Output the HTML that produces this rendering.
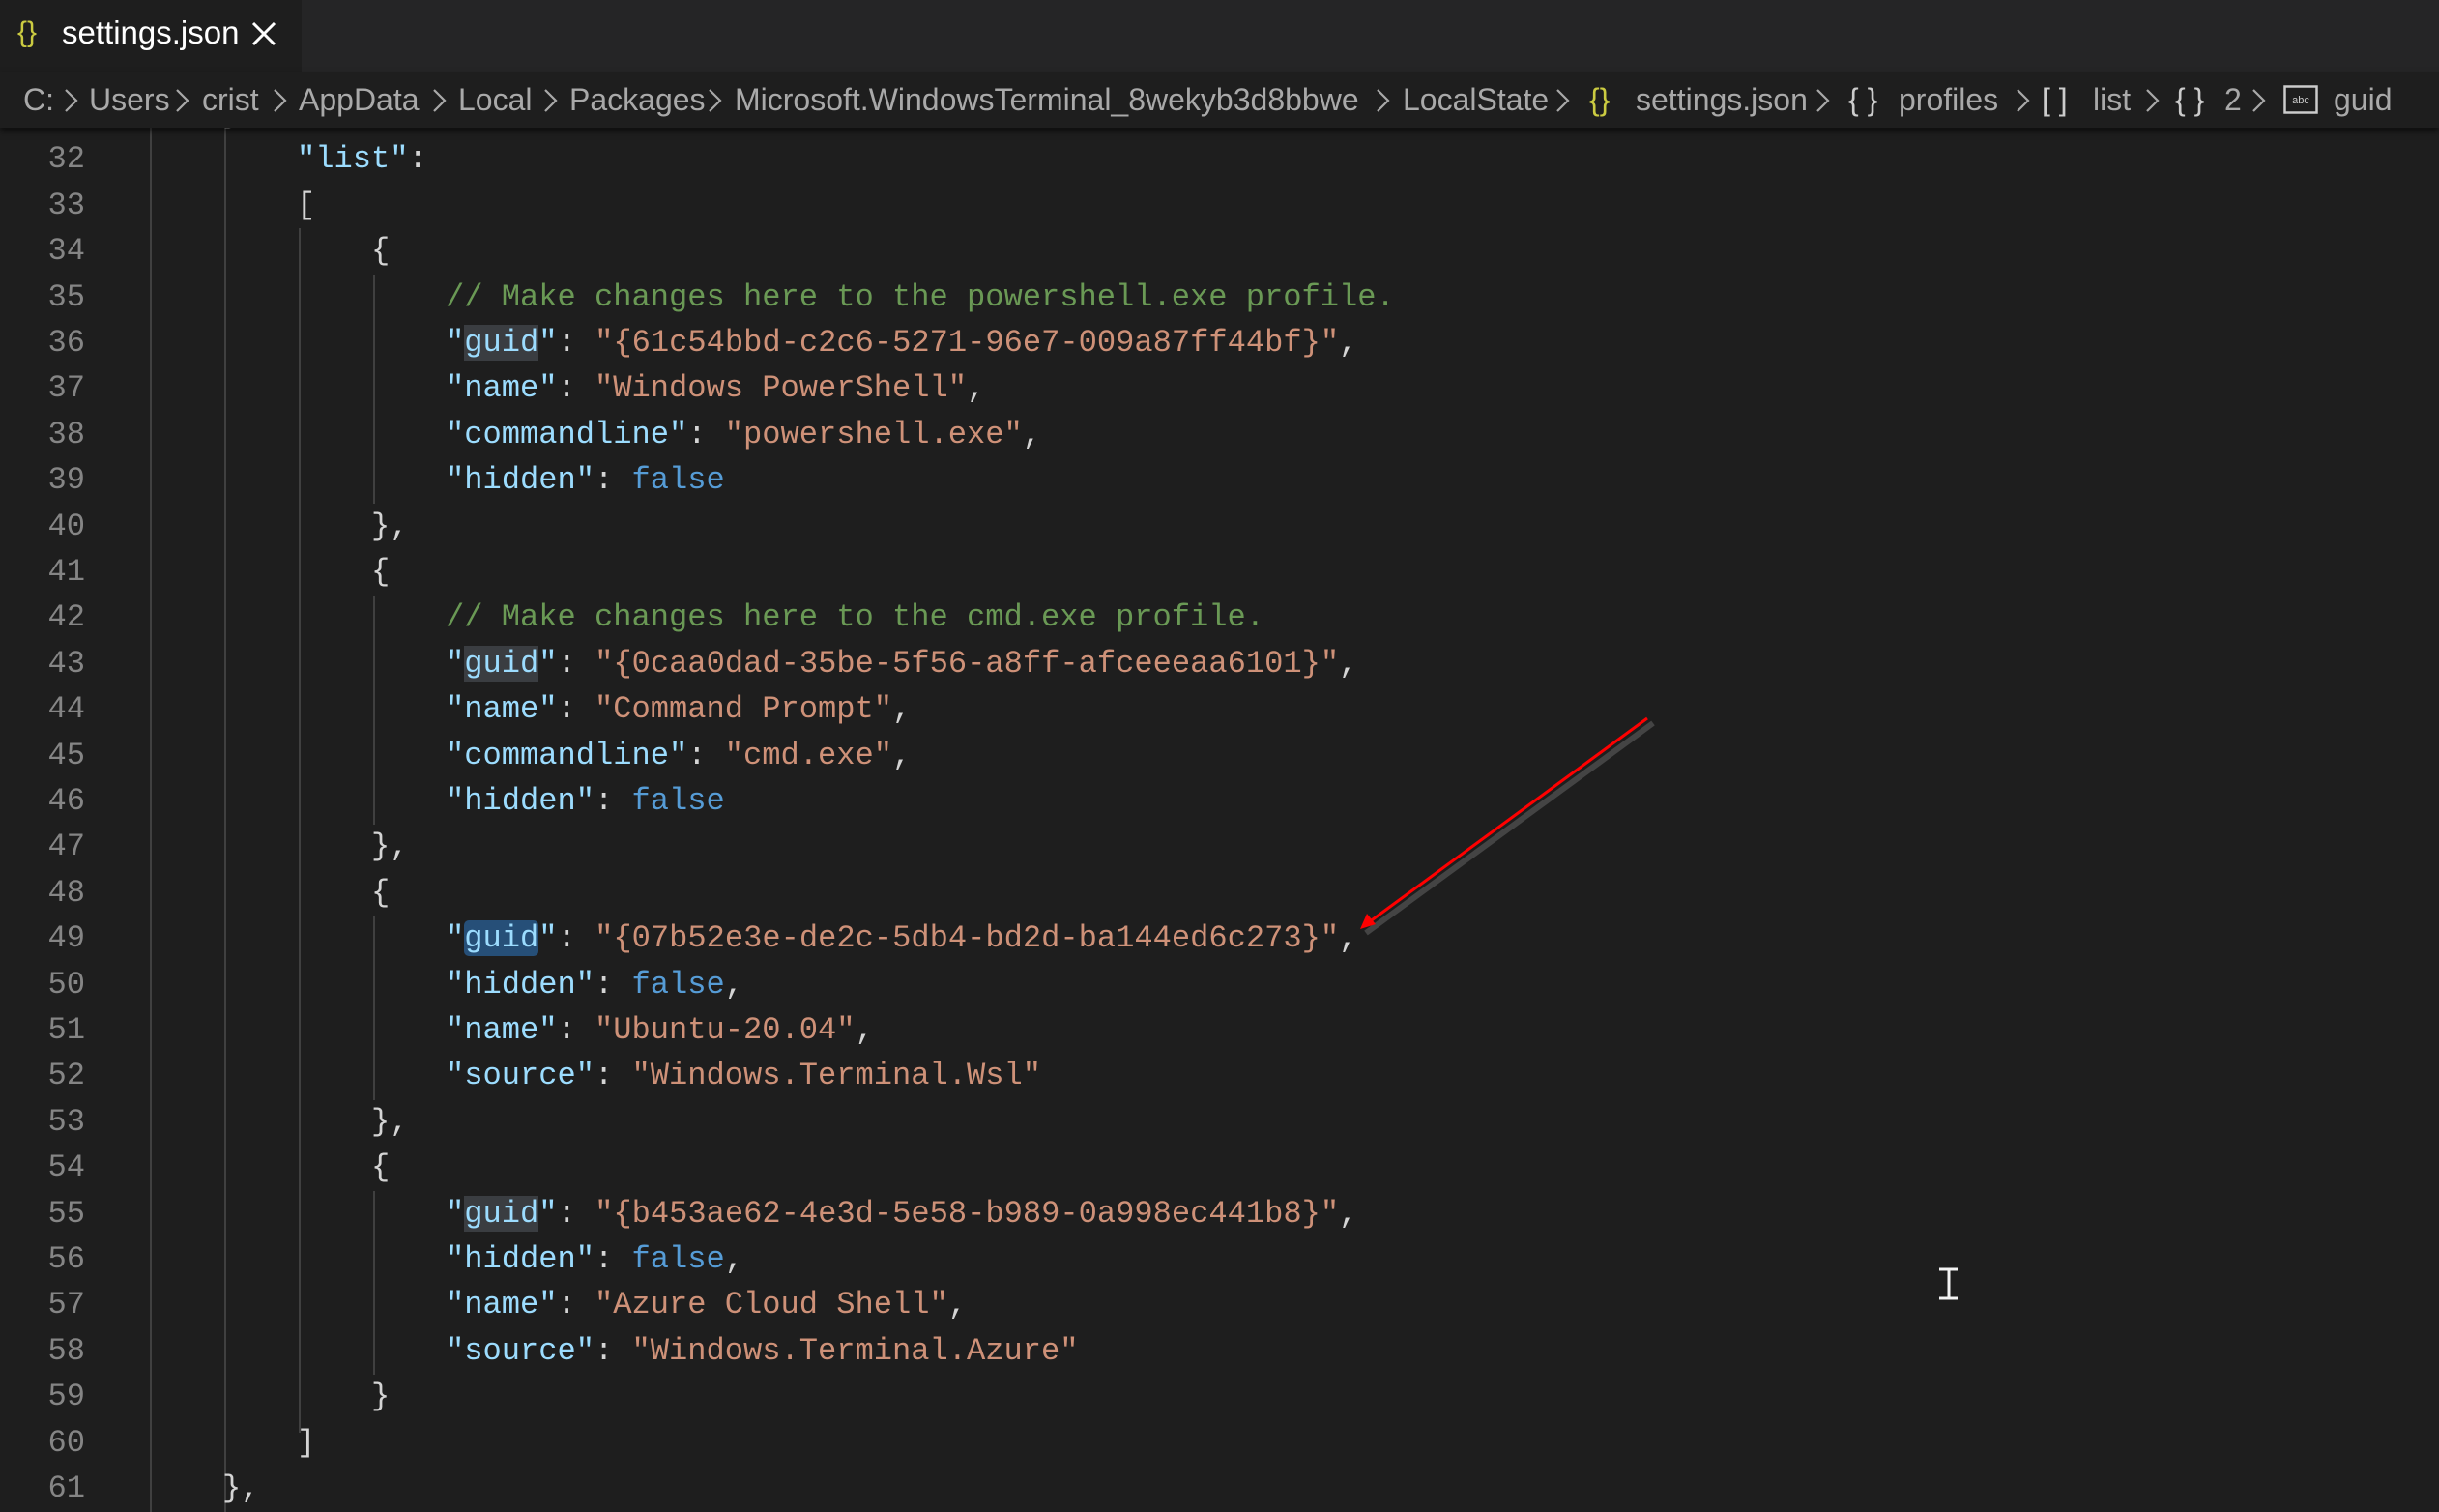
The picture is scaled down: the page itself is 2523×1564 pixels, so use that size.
<!DOCTYPE html>
<html><head><meta charset="utf-8">
<style>
*{margin:0;padding:0;box-sizing:border-box}
html,body{width:2523px;height:1564px;overflow:hidden;background:#1e1e1e}
body{position:relative;font-family:"Liberation Sans",sans-serif}
#tabs{position:absolute;left:0;top:0;width:2523px;height:74px;background:#252526}
#tab{position:absolute;left:0;top:0;width:312px;height:74px;background:#1e1e1e}
.ti{position:absolute;top:12px;font-size:33px;color:#fff;white-space:pre;line-height:44px}
#bc{position:absolute;left:0;top:74px;width:2523px;height:58px;background:#1e1e1e;box-shadow:0 4px 6px rgba(0,0,0,.55);z-index:5}
.b{position:absolute;top:8px;font-size:32px;color:#a9a9a9;line-height:42px;white-space:pre}
.ch{position:absolute;top:18px}
.code{position:absolute;left:0;top:0;width:2523px;height:1564px;font-family:"Liberation Mono",monospace;font-size:32.1px}
.ln{position:absolute;left:0;width:88px;text-align:right;color:#858585;height:47.4px;line-height:47.4px}
.l{position:absolute;left:-1px;white-space:pre;color:#d4d4d4;height:47.4px;line-height:47.4px}
.k{color:#9cdcfe}.s{color:#ce9178}.f{color:#569cd6}.c{color:#6a9955}
.h{background:#3a3d41}.hb{background:#264f78;border-radius:5px}
.g{position:absolute;width:2px;background:#404040}
</style></head><body>
<div id="tabs"><div id="tab">
<div class="ti" style="left:18px;color:#cbcb41;font-size:30px">{}</div>
<div class="ti" style="left:64px">settings.json</div>
<svg style="position:absolute;left:260px;top:22px" width="26" height="26" viewBox="0 0 26 26"><path d="M2 2L24 24M24 2L2 24" stroke="#fff" stroke-width="3"/></svg>
</div></div>
<div id="bc">
<div class="b" style="left:24px">C:</div>
<div class="b" style="left:92px">Users</div>
<div class="b" style="left:209px">crist</div>
<div class="b" style="left:309px">AppData</div>
<div class="b" style="left:474px">Local</div>
<div class="b" style="left:589px">Packages</div>
<div class="b" style="left:760px">Microsoft.WindowsTerminal_8wekyb3d8bbwe</div>
<div class="b" style="left:1451px">LocalState</div>
<div class="b" style="left:1644px;color:#cbcb41">{}</div>
<div class="b" style="left:1692px">settings.json</div>
<div class="b" style="left:1912px;color:#ccc">{ }</div>
<div class="b" style="left:1964px">profiles</div>
<div class="b" style="left:2112px;color:#ccc">[ ]</div>
<div class="b" style="left:2165px">list</div>
<div class="b" style="left:2250px;color:#ccc">{ }</div>
<div class="b" style="left:2301px">2</div>
<svg style="position:absolute;left:2362px;top:14px" width="36" height="30" viewBox="0 0 36 30"><rect x="1.5" y="1.5" width="33" height="27" fill="none" stroke="#ccc" stroke-width="2.5"/><text x="18" y="19" font-size="11" fill="#ccc" text-anchor="middle" font-family="Liberation Sans">abc</text></svg>
<div class="b" style="left:2414px">guid</div>
<svg style="position:absolute;left:0;top:0" width="2523" height="58">
<g fill="none" stroke="#a9a9a9" stroke-width="2.2">
<path d="M68 19l11 11-11 11"/><path d="M183 19l11 11-11 11"/><path d="M284 19l11 11-11 11"/><path d="M449 19l11 11-11 11"/><path d="M564 19l11 11-11 11"/><path d="M734 19l11 11-11 11"/><path d="M1425 19l11 11-11 11"/><path d="M1611 19l11 11-11 11"/><path d="M1880 19l11 11-11 11"/><path d="M2087 19l11 11-11 11"/><path d="M2221 19l11 11-11 11"/><path d="M2331 19l11 11-11 11"/>
</g></svg>
</div>
<div class="code">
<div class="g" style="left:155px;top:132px;height:1432px"></div>
<div class="g" style="left:232px;top:132px;height:1432px"></div>
<div class="g" style="left:309px;top:236px;height:1246px"></div>
<div class="g" style="left:386px;top:284px;height:237px"></div>
<div class="g" style="left:386px;top:616px;height:237px"></div>
<div class="g" style="left:386px;top:948px;height:190px"></div>
<div class="g" style="left:386px;top:1232px;height:190px"></div>

<div class="ln" style="top:94px">31</div><div class="l" style="top:94px">            },</div>
<div class="ln" style="top:141px">32</div><div class="l" style="top:141px">                <span class="k">"list"</span>:</div>
<div class="ln" style="top:189px">33</div><div class="l" style="top:189px">                [</div>
<div class="ln" style="top:236px">34</div><div class="l" style="top:236px">                    {</div>
<div class="ln" style="top:284px">35</div><div class="l" style="top:284px">                        <span class="c">// Make changes here to the powershell.exe profile.</span></div>
<div class="ln" style="top:331px">36</div><div class="l" style="top:331px">                        <span class="k">"<span class="h">guid</span>"</span>: <span class="s">"{61c54bbd-c2c6-5271-96e7-009a87ff44bf}"</span>,</div>
<div class="ln" style="top:378px">37</div><div class="l" style="top:378px">                        <span class="k">"name"</span>: <span class="s">"Windows PowerShell"</span>,</div>
<div class="ln" style="top:426px">38</div><div class="l" style="top:426px">                        <span class="k">"commandline"</span>: <span class="s">"powershell.exe"</span>,</div>
<div class="ln" style="top:473px">39</div><div class="l" style="top:473px">                        <span class="k">"hidden"</span>: <span class="f">false</span></div>
<div class="ln" style="top:521px">40</div><div class="l" style="top:521px">                    },</div>
<div class="ln" style="top:568px">41</div><div class="l" style="top:568px">                    {</div>
<div class="ln" style="top:615px">42</div><div class="l" style="top:615px">                        <span class="c">// Make changes here to the cmd.exe profile.</span></div>
<div class="ln" style="top:663px">43</div><div class="l" style="top:663px">                        <span class="k">"<span class="h">guid</span>"</span>: <span class="s">"{0caa0dad-35be-5f56-a8ff-afceeeaa6101}"</span>,</div>
<div class="ln" style="top:710px">44</div><div class="l" style="top:710px">                        <span class="k">"name"</span>: <span class="s">"Command Prompt"</span>,</div>
<div class="ln" style="top:758px">45</div><div class="l" style="top:758px">                        <span class="k">"commandline"</span>: <span class="s">"cmd.exe"</span>,</div>
<div class="ln" style="top:805px">46</div><div class="l" style="top:805px">                        <span class="k">"hidden"</span>: <span class="f">false</span></div>
<div class="ln" style="top:852px">47</div><div class="l" style="top:852px">                    },</div>
<div class="ln" style="top:900px">48</div><div class="l" style="top:900px">                    {</div>
<div class="ln" style="top:947px">49</div><div class="l" style="top:947px">                        <span class="k">"<span class="hb">guid</span>"</span>: <span class="s">"{07b52e3e-de2c-5db4-bd2d-ba144ed6c273}"</span>,</div>
<div class="ln" style="top:995px">50</div><div class="l" style="top:995px">                        <span class="k">"hidden"</span>: <span class="f">false</span>,</div>
<div class="ln" style="top:1042px">51</div><div class="l" style="top:1042px">                        <span class="k">"name"</span>: <span class="s">"Ubuntu-20.04"</span>,</div>
<div class="ln" style="top:1089px">52</div><div class="l" style="top:1089px">                        <span class="k">"source"</span>: <span class="s">"Windows.Terminal.Wsl"</span></div>
<div class="ln" style="top:1137px">53</div><div class="l" style="top:1137px">                    },</div>
<div class="ln" style="top:1184px">54</div><div class="l" style="top:1184px">                    {</div>
<div class="ln" style="top:1232px">55</div><div class="l" style="top:1232px">                        <span class="k">"<span class="h">guid</span>"</span>: <span class="s">"{b453ae62-4e3d-5e58-b989-0a998ec441b8}"</span>,</div>
<div class="ln" style="top:1279px">56</div><div class="l" style="top:1279px">                        <span class="k">"hidden"</span>: <span class="f">false</span>,</div>
<div class="ln" style="top:1326px">57</div><div class="l" style="top:1326px">                        <span class="k">"name"</span>: <span class="s">"Azure Cloud Shell"</span>,</div>
<div class="ln" style="top:1374px">58</div><div class="l" style="top:1374px">                        <span class="k">"source"</span>: <span class="s">"Windows.Terminal.Azure"</span></div>
<div class="ln" style="top:1421px">59</div><div class="l" style="top:1421px">                    }</div>
<div class="ln" style="top:1469px">60</div><div class="l" style="top:1469px">                ]</div>
<div class="ln" style="top:1516px">61</div><div class="l" style="top:1516px">            },</div>
</div>
<svg style="position:absolute;left:0;top:0" width="2523" height="1564">
<line x1="1710" y1="748" x2="1413" y2="965" stroke="#444" stroke-width="6"/>
<line x1="1704" y1="743" x2="1416" y2="954" stroke="#f00" stroke-width="3"/>
<path d="M1407 961 L1414 945 L1423 956 Z" fill="#f00"/>
<path d="M2006 1313h19M2006 1343h19M2016 1313v30" stroke="#f3f3f3" stroke-width="3"/>
</svg>
</body></html>
